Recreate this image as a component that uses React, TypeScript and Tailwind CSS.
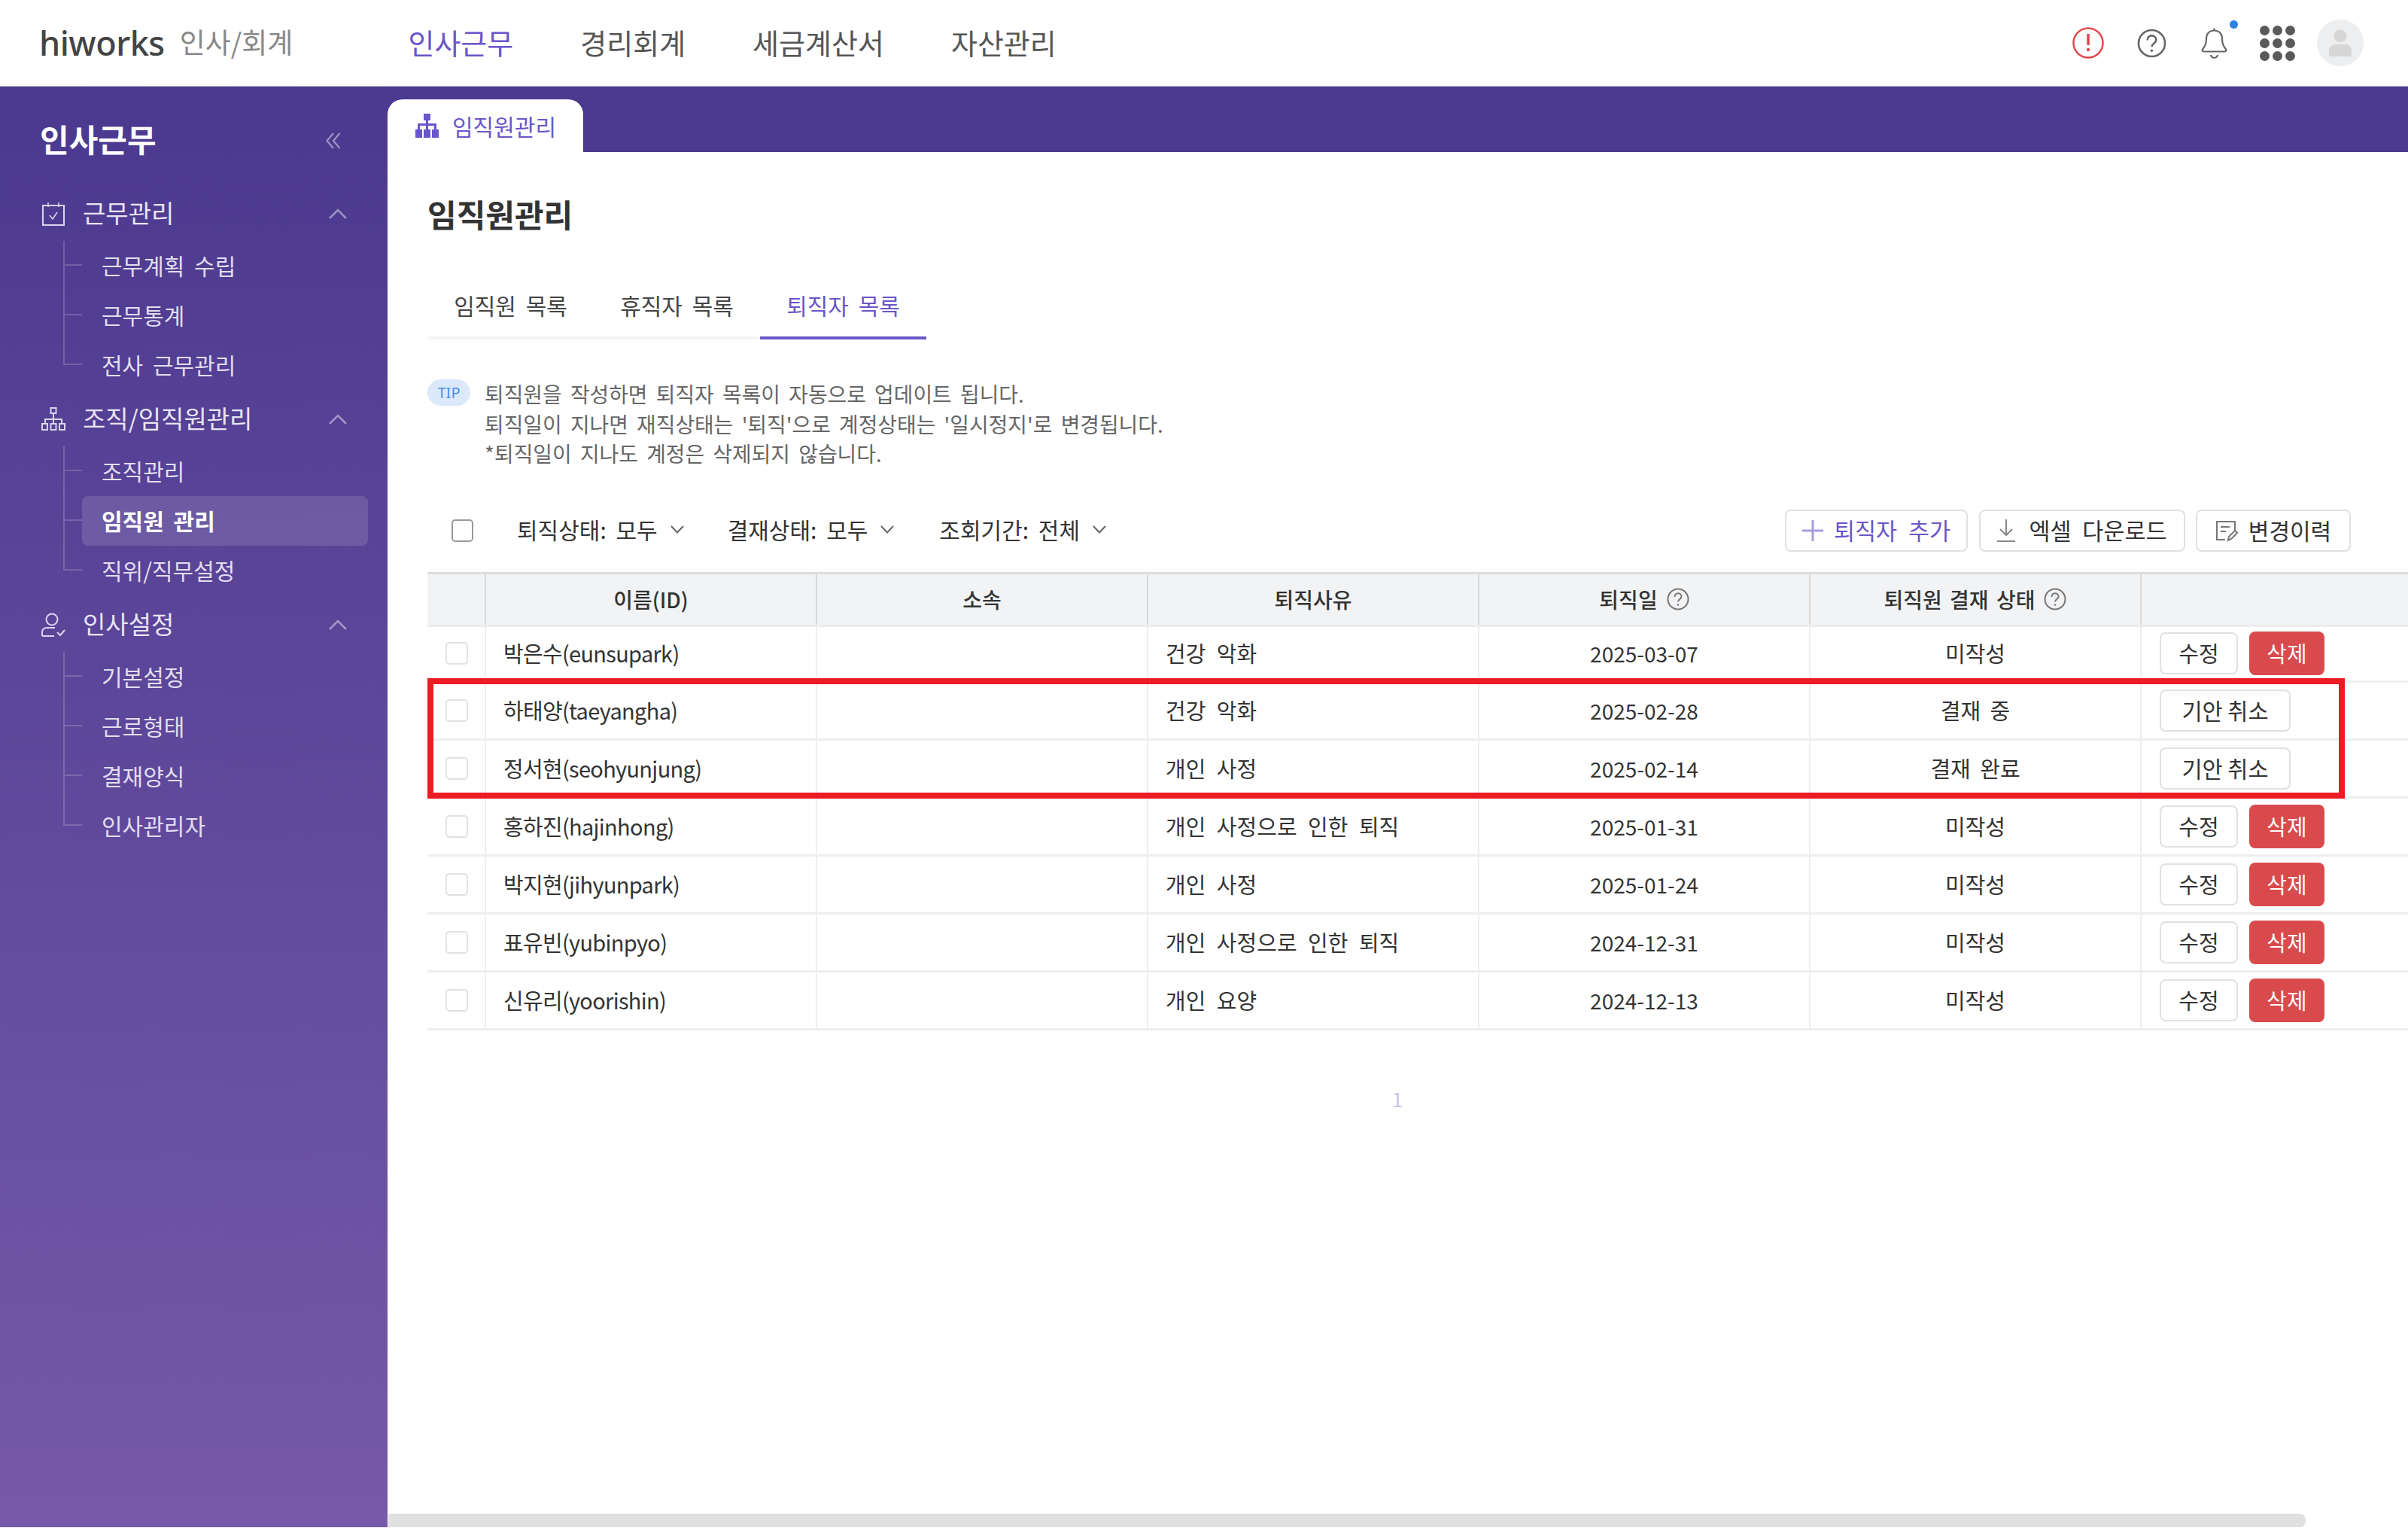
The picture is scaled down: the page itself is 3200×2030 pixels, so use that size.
import React from "react";

const Sitemap = ({ solid }: { solid?: boolean }) =>
  solid ? (
    <svg width="31" height="32" viewBox="0 0 31 32" fill="#6a55c9">
      <rect x="11" y="0" width="9" height="9" />
      <rect x="14" y="9" width="3" height="6" />
      <rect x="3" y="13" width="25" height="3" />
      <rect x="3" y="15" width="3" height="6" />
      <rect x="14" y="15" width="3" height="6" />
      <rect x="25" y="15" width="3" height="6" />
      <rect x="0" y="21" width="9" height="11" />
      <rect x="11" y="21" width="9" height="11" />
      <rect x="22" y="21" width="9" height="11" />
    </svg>
  ) : (
    <svg width="32" height="32" viewBox="0 0 32 32" fill="none" stroke="#d9d4ea" strokeWidth="2">
      <rect x="12.5" y="1" width="7" height="7" />
      <path d="M16 8v8M5 21v-5h22v5M16 16v5" />
      <rect x="1" y="22" width="7" height="8" />
      <rect x="12.5" y="22" width="7" height="8" />
      <rect x="24" y="22" width="7" height="8" />
    </svg>
  );

const CalendarCheck = () => (
  <svg width="32" height="32" viewBox="0 0 32 32" fill="none" stroke="#d9d4ea" strokeWidth="2">
    <rect x="2" y="5" width="28" height="26" />
    <path d="M9 1v6M23 1v6M11 18l4 5 6-9" strokeWidth="1.6" />
  </svg>
);

const UserCheck = () => (
  <svg width="32" height="32" viewBox="0 0 32 32" fill="none" stroke="#d9d4ea" strokeWidth="2">
    <circle cx="14" cy="9" r="7.5" />
    <path d="M1 31v-5c0-4 3-6 7-6h10M1 31h16M21 26l4 4 6-7" />
  </svg>
);

const ChevUp = () => (
  <svg width="24" height="14" viewBox="0 0 24 14" fill="none" stroke="#ffffff" strokeOpacity="0.45" strokeWidth="2.5">
    <path d="M1 13 12 2l11 11" />
  </svg>
);

const ChevDown = () => (
  <svg width="18" height="11" viewBox="0 0 18 11" fill="none" stroke="#666" strokeWidth="2">
    <path d="M1 1l8 8.5L17 1" />
  </svg>
);

const Help = ({ size = 30, color = "#777" }: { size?: number; color?: string }) => (
  <svg width={size} height={size} viewBox="0 0 30 30" fill="none" stroke={color} strokeWidth="2">
    <circle cx="15" cy="15" r="13.5" />
    <path d="M10.5 12c0-3 2-4.800 4.500-4.800s4.500 1.800 4.500 4.300c0 3.500-4.500 3.500-4.500 7" />
    <circle cx="15" cy="22.500" r="1.300" fill={color} stroke="none" />
  </svg>
);

const Dots = () => (
  <svg width="47" height="47" viewBox="0 0 47 47" fill="#5a5a5a">
    {[6.5, 23.5, 40.5].flatMap((y) =>
      [6.5, 23.5, 40.5].map((x) => <circle key={`${x}-${y}`} cx={x} cy={y} r="6.5" />)
    )}
  </svg>
);

const sections = [
  { name: "근무관리", icon: <CalendarCheck />, items: ["근무계획 수립", "근무통계", "전사 근무관리"] },
  { name: "조직/임직원관리", icon: <Sitemap />, items: ["조직관리", "임직원 관리", "직위/직무설정"] },
  { name: "인사설정", icon: <UserCheck />, items: ["기본설정", "근로형태", "결재양식", "인사관리자"] },
];

const Sidebar = () => (
  <aside className="w-[515px] shrink-0 mb-px bg-linear-to-b from-[#4b398f] to-[#7659a8] pt-[44px]">
    <div className="flex items-center justify-between h-[50px] pl-[53px] pr-[62px]">
      <span className="text-[42px] font-bold text-white pb-[2px]">인사근무</span>
      <svg width="20" height="22" viewBox="0 0 20 22" fill="none" stroke="#ffffff" strokeOpacity="0.45" strokeWidth="2.2" className="mt-[6px]">
        <path d="M10 1 1.500 11 10 21M18.500 1 10 11l8.500 10" />
      </svg>
    </div>
    <div className="mt-[42px] flex flex-col gap-[6px]">
      {sections.map((s) => (
        <div key={s.name} className="flex flex-col">
          <div className="flex items-center h-[66px] pl-[55px] pr-[54px] mb-[3px]">
            <span className="w-[32px] flex justify-center">{s.icon}</span>
            <span className="ml-[23px] pb-[2px] text-[33px] text-[#e8e4f3]">{s.name}</span>
            <span className="ml-auto"><ChevUp /></span>
          </div>
          {s.items.map((it, i) => {
            const active = it === "임직원 관리";
            return (
              <div key={it} className="flex h-[66px] ml-[84px] mr-[26px]">
                <div className="w-[25px] flex flex-col shrink-0">
                  <div className="h-1/2 border-l-2 border-b-2 border-[#ffffff2e]" />
                  <div className={i === s.items.length - 1 ? "h-1/2" : "h-1/2 border-l-2 border-[#ffffff2e]"} />
                </div>
                <div className={active
                  ? "flex-1 flex items-center pl-[26px] pb-[1px] rounded-lg bg-[#ffffff21] text-white font-bold text-[30px]"
                  : "flex-1 flex items-center pl-[26px] pb-[1px] text-[#e2deef] text-[30px]"}>
                  {it}
                </div>
              </div>
            );
          })}
        </div>
      ))}
    </div>
  </aside>
);

const Header = () => (
  <header className="h-[115px] shrink-0 flex items-center border-b border-[#c9c9d2] bg-white pl-[52px] pr-[59px]">
    <span className="text-[45px] font-medium text-[#444] tracking-[-0.5px] [font-family:'Noto_Sans',sans-serif]">hiworks</span>
    <span className="ml-[20px] pb-[3px] text-[37px] text-[#888]">인사/회계</span>
    <nav className="ml-[153px] pb-[3px] flex gap-[89px] text-[38px] text-[#555]">
      <span className="text-[#6a55c9]">인사근무</span>
      <span>경리회계</span>
      <span>세금계산서</span>
      <span>자산관리</span>
    </nav>
    <div className="ml-auto flex items-center">
      <svg width="42" height="42" viewBox="0 0 42 42" fill="none" stroke="#e0484e" strokeWidth="2.5">
        <circle cx="21" cy="21" r="19.500" />
        <path d="M21 9v15" strokeWidth="3.500" />
        <circle cx="21" cy="30" r="2.200" fill="#e0484e" stroke="none" />
      </svg>
      <span className="ml-[44px]"><Help size={39} color="#666" /></span>
      <span className="ml-[46px] relative flex">
        <svg width="35" height="42" viewBox="0 0 35 42" fill="none" stroke="#666" strokeWidth="2.200">
          <path d="M17.500 1.500v3M17.500 4.500c-7 0-10.500 5-10.500 11 0 7-2 10-5 14-1 1.500 0 3 2 3h27c2 0 3-1.500 2-3-3-4-5-7-5-14 0-6-3.500-11-10.500-11Z" />
          <path d="M13 37c.5 5 8.500 5 9 0" />
        </svg>
        <span className="absolute -right-[14px] -top-[9px] w-[11px] h-[11px] rounded-full bg-[#2d83e0]" />
      </span>
      <span className="ml-[43px] flex"><Dots /></span>
      <span className="ml-[29px] w-[62px] h-[62px] rounded-full bg-[#eceef0] flex items-center justify-center">
        <svg width="30" height="36" viewBox="0 0 30 36" fill="#d6d6d6">
          <circle cx="15" cy="9" r="8.500" />
          <path d="M0 36v-7c0-6 4-9 9-9h12c5 0 9 3 9 9v7Z" />
        </svg>
      </span>
    </div>
  </header>
);

const BtnBase = "h-[56px] flex items-center justify-center rounded-lg border-2 border-[#e1e1e1] bg-white text-[#333]";

const rows = [
  ["박은수(eunsupark)", "건강 악화", "2025-03-07", "미작성", false],
  ["하태양(taeyangha)", "건강 악화", "2025-02-28", "결재 중", true],
  ["정서현(seohyunjung)", "개인 사정", "2025-02-14", "결재 완료", true],
  ["홍하진(hajinhong)", "개인 사정으로 인한 퇴직", "2025-01-31", "미작성", false],
  ["박지현(jihyunpark)", "개인 사정", "2025-01-24", "미작성", false],
  ["표유빈(yubinpyo)", "개인 사정으로 인한 퇴직", "2024-12-31", "미작성", false],
  ["신유리(yoorishin)", "개인 요양", "2024-12-13", "미작성", false],
] as const;

const gridCols = "grid grid-cols-[78px_440px_440px_440px_440px_440px_1fr]";

const Table = () => (
  <div className="relative mt-[27px]">
    <div className={`${gridCols} h-[73px] bg-[#f2f3f5] border-t-[3px] border-b-[3px] border-t-[#dcdcdc] border-b-[#ececee] text-[28px] font-medium text-[#333] [word-spacing:4px]`}>
      <div className="border-r-2 border-[#d9d9d9]" />
      <div className="flex items-center justify-center border-r-2 border-[#d9d9d9]">이름(ID)</div>
      <div className="flex items-center justify-center border-r-2 border-[#d9d9d9]">소속</div>
      <div className="flex items-center justify-center border-r-2 border-[#d9d9d9]">퇴직사유</div>
      <div className="flex items-center justify-center gap-[12px] border-r-2 border-[#d9d9d9]">퇴직일 <Help /></div>
      <div className="flex items-center justify-center gap-[12px] border-r-2 border-[#d9d9d9]">퇴직원 결재 상태 <Help /></div>
      <div />
    </div>
    {rows.map((r, i) => (
      <div key={r[0]} className={`${gridCols} ${i === 0 ? "h-[74px]" : "h-[77px]"} border-b-[3px] border-[#eeeeee] text-[29px] text-[#333]`}>
        <div className="flex items-center justify-center border-r-2 border-[#eeeeee]">
          <span className="w-[30px] h-[30px] ml-[1px] rounded-[5px] border-2 border-[#e2e2e2]" />
        </div>
        <div className="flex items-center pl-[23px] border-r-2 border-[#eeeeee] tracking-[-0.7px]">{r[0]}</div>
        <div className="border-r-2 border-[#eeeeee]" />
        <div className="flex items-center pl-[23px] border-r-2 border-[#eeeeee] [word-spacing:8px]">{r[1]}</div>
        <div className="flex items-center justify-center border-r-2 border-[#eeeeee] text-[28px]">{r[2]}</div>
        <div className="flex items-center justify-center border-r-2 border-[#eeeeee]">{r[3]}</div>
        <div className="flex items-center pl-[24px] gap-[15px]">
          {r[4] ? (
            <button className={`${BtnBase} w-[174px] text-[29.5px]`}>기안 취소</button>
          ) : (
            <>
              <button className={`${BtnBase} w-[104px] text-[29px]`}>수정</button>
              <button className="h-[58px] w-[100px] flex items-center justify-center rounded-lg bg-[#d94a4d] text-[29px] text-white">삭제</button>
            </>
          )}
        </div>
      </div>
    ))}
    <div className="absolute left-0 top-[141px] w-[2548px] h-[160px] border-[8px] border-[#ed1c24]" />
  </div>
);

const Filter = ({ label, className }: { label: string; className: string }) => (
  <span className={`flex items-center gap-[17px] text-[30px] text-[#333] ${className}`}>
    {label}
    <ChevDown />
  </span>
);

const Content = () => (
  <div className="flex-1 min-h-0 pl-[53px] bg-white overflow-hidden">
    <h1 className="mt-[56px] h-[50px] flex items-center text-[42px] font-bold text-[#333]">임직원관리</h1>
    <div className="mt-[55px] flex w-[663px] h-[88px] border-b-4 border-[#f2f3f5] text-[30px] text-[#444]">
      <div className="w-[221px] flex items-center justify-center">임직원 목록</div>
      <div className="w-[221px] flex items-center justify-center">휴직자 목록</div>
      <div className="w-[221px] -mb-[4px] flex items-center justify-center border-b-4 border-[#6c55c6] text-[#6a55c9]">퇴직자 목록</div>
    </div>
    <div className="mt-[53px] flex">
      <span className="w-[57px] h-[35px] rounded-full bg-[#dce9fb] text-[#4d8fe8] text-[20px] flex items-center justify-center [font-family:'Noto_Sans',sans-serif]">TIP</span>
      <div className="ml-[19px] text-[27.9px] leading-[39.5px] text-[#666] [word-spacing:5px]">
        <p>퇴직원을 작성하면 퇴직자 목록이 자동으로 업데이트 됩니다.</p>
        <p>퇴직일이 지나면 재직상태는 '퇴직'으로 계정상태는 '일시정지'로 변경됩니다.</p>
        <p>*퇴직일이 지나도 계정은 삭제되지 않습니다.</p>
      </div>
    </div>
    <div className="mt-[54px] flex items-center h-[56px] pr-[76px]">
      <span className="ml-[32px] w-[29px] h-[30px] rounded-[5px] border-2 border-[#999]" />
      <Filter label="퇴직상태: 모두" className="ml-[58px] pb-[2px]" />
      <Filter label="결재상태: 모두" className="ml-[58px] pb-[2px]" />
      <Filter label="조회기간: 전체" className="ml-[60px] pb-[2px]" />
      <button className={`${BtnBase} ml-auto w-[243px] gap-[14px] text-[30.5px] !text-[#6a55c9] [word-spacing:8px]`}>
        <svg width="28" height="28" viewBox="0 0 28 28" stroke="#a99bdf" strokeWidth="3">
          <path d="M14 0v28M0 14h28" />
        </svg>
        퇴직자 추가
      </button>
      <button className={`${BtnBase} ml-[15px] w-[274px] gap-[18px] text-[30.5px] [word-spacing:8px]`}>
        <svg width="24" height="30" viewBox="0 0 24 30" fill="none" stroke="#888" strokeWidth="2">
          <path d="M12 0v21M4 13l8 8 8-8M0 29h24" />
        </svg>
        엑셀 다운로드
      </button>
      <button className={`${BtnBase} ml-[14px] w-[206px] gap-[14px] text-[30px]`}>
        <svg width="30" height="30" viewBox="0 0 30 30" fill="none" stroke="#777" strokeWidth="2">
          <path d="M13 27H2V3h24v11M7 10h12M7 16h7" />
          <path d="M17 28l1-5 8-8 3 3-8 8Z" />
        </svg>
        변경이력
      </button>
    </div>
    <Table />
    <div className="mt-[76px] w-[2578px] h-[30px] flex items-center justify-center text-[26px] text-[#c9c3e8]">1</div>
  </div>
);

export default function App() {
  return (
    <div className="w-[3200px] h-[2030px] overflow-hidden flex flex-col bg-white [word-spacing:6px] [font-family:'Noto_Sans_CJK_KR','Noto_Sans',sans-serif]">
      <Header />
      <div className="flex-1 min-h-0 flex">
        <Sidebar />
        <main className="flex-1 min-w-0 flex flex-col">
          <div className="h-[87px] shrink-0 bg-[#4b398f] flex items-end">
            <div className="w-[260px] h-[70px] rounded-t-[20px] bg-white flex items-center pl-[37px] gap-[18px] text-[30px] text-[#6a55c9]">
              <Sitemap solid />
              임직원관리
            </div>
          </div>
          <Content />
          <div className="h-[18px] shrink-0 mb-px bg-white">
            <div className="w-[2548px] h-full ml-px rounded-r-lg bg-[#e0e0e0]" />
          </div>
        </main>
      </div>
    </div>
  );
}
